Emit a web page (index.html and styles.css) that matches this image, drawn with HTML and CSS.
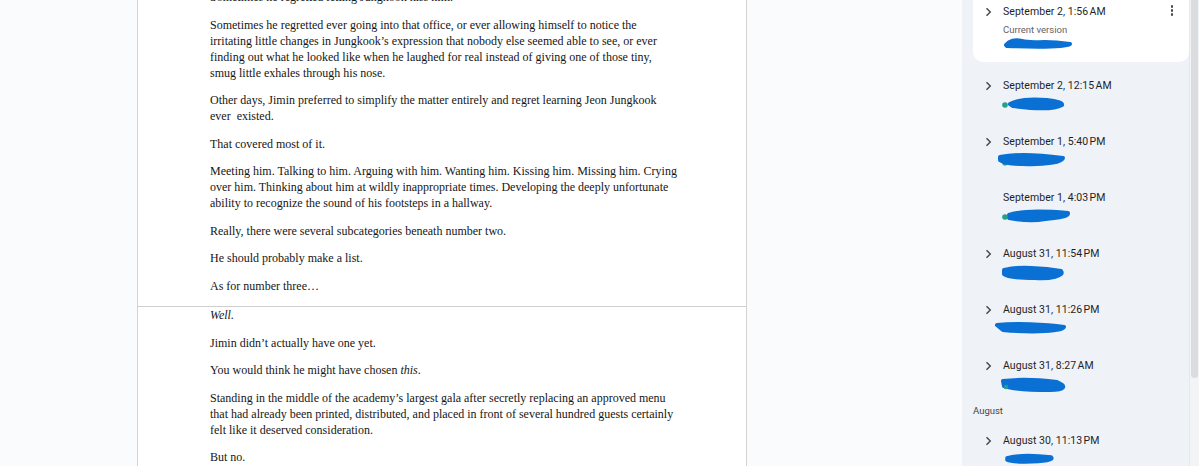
FILE: index.html
```html
<!DOCTYPE html>
<html lang="en">
<head>
    <meta charset="UTF-8">
    <meta name="viewport" content="width=device-width, initial-scale=1.0">
    <title>Version history</title>
    <link rel="stylesheet" href="styles.css">
</head>
<body>
    <div class="workspace">
        <div class="page page-first">
            <p class="first">Sometimes he regretted letting Jungkook kiss him.</p>
            <p>Sometimes he regretted ever going into that office, or ever allowing himself to notice the<br>
            irritating little changes in Jungkook’s expression that nobody else seemed able to see, or ever<br>
            finding out what he looked like when he laughed for real instead of giving one of those tiny,<br>
            smug little exhales through his nose.</p>
            <p>Other days, Jimin preferred to simplify the matter entirely and regret learning Jeon Jungkook<br>
            ever&nbsp; existed.</p>
            <p>That covered most of it.</p>
            <p>Meeting him. Talking to him. Arguing with him. Wanting him. Kissing him. Missing him. Crying<br>
            over him. Thinking about him at wildly inappropriate times. Developing the deeply unfortunate<br>
            ability to recognize the sound of his footsteps in a hallway.</p>
            <p>Really, there were several subcategories beneath number two.</p>
            <p>He should probably make a list.</p>
            <p class="last">As for number three…</p>
        </div>
        <div class="page page-second">
            <p><em>Well.</em></p>
            <p>Jimin didn’t actually have one yet.</p>
            <p>You would think he might have chosen <em>this</em>.</p>
            <p>Standing in the middle of the academy’s largest gala after secretly replacing an approved menu<br>
            that had already been printed, distributed, and placed in front of several hundred guests certainly<br>
            felt like it deserved consideration.</p>
            <p>But no.</p>
        </div>
    </div>

    <div class="history">
        <div class="version version-current">
            <span class="chev"><svg width="7" height="10" viewBox="0 0 7 10"><path d="M1.5 1.2 L5.3 5 L1.5 8.8" fill="none" stroke="#444746" stroke-width="1.4"/></svg></span>
            <div class="version-body">
                <div class="version-date">September 2, 1:56&#8239;AM</div>
                <div class="version-note">Current version</div>
                <svg class="scribble" width="90" height="12" viewBox="0 0 90 12"><path d="M11 8 C14 4 20 2 27 4 C34 6 42 5 50 5 C60 5 68 6 75 7 C70 10 40 10 12 9 Z" fill="#0a70d4" stroke="#0a70d4" stroke-width="4" stroke-linejoin="round" stroke-linecap="round"/></svg>
            </div>
            <span class="kebab"><i></i><i></i><i></i></span>
        </div>

        <div class="version">
            <span class="chev"><svg width="7" height="10" viewBox="0 0 7 10"><path d="M1.5 1.2 L5.3 5 L1.5 8.8" fill="none" stroke="#444746" stroke-width="1.4"/></svg></span>
            <div class="version-body">
                <div class="version-date">September 2, 12:15&#8239;AM</div>
                <svg class="scribble" width="90" height="14" viewBox="0 0 90 14"><path d="M15 7 C24 2 40 2 52 3 C62 4 68 6 67 8 C60 12 40 12 18 9 Z" fill="#0a70d4" stroke="#0a70d4" stroke-width="4" stroke-linejoin="round"/><circle cx="10" cy="8" r="2.8" fill="#26a08a"/></svg>
            </div>
        </div>

        <div class="version">
            <span class="chev"><svg width="7" height="10" viewBox="0 0 7 10"><path d="M1.5 1.2 L5.3 5 L1.5 8.8" fill="none" stroke="#444746" stroke-width="1.4"/></svg></span>
            <div class="version-body">
                <div class="version-date">September 1, 5:40&#8239;PM</div>
                <svg class="scribble" width="90" height="14" viewBox="0 0 90 14"><circle cx="10" cy="10" r="2.6" fill="#26a08a"/><path d="M5 4 C20 1 45 2 68 5 C68 9 50 12 28 11 C16 11 8 9 5 7 Z" fill="#0a70d4" stroke="#0a70d4" stroke-width="4" stroke-linejoin="round"/></svg>
            </div>
        </div>

        <div class="version">
            <span class="chev"></span>
            <div class="version-body">
                <div class="version-date">September 1, 4:03&#8239;PM</div>
                <svg class="scribble" width="90" height="14" viewBox="0 0 90 14"><path d="M14 6 C25 2 50 2 73 4 C74 8 60 9 50 10 C40 12 25 11 14 9 Z" fill="#0a70d4" stroke="#0a70d4" stroke-width="4" stroke-linejoin="round"/><circle cx="10" cy="8" r="2.8" fill="#26a08a"/></svg>
            </div>
        </div>

        <div class="version">
            <span class="chev"><svg width="7" height="10" viewBox="0 0 7 10"><path d="M1.5 1.2 L5.3 5 L1.5 8.8" fill="none" stroke="#444746" stroke-width="1.4"/></svg></span>
            <div class="version-body">
                <div class="version-date">August 31, 11:54&#8239;PM</div>
                <svg class="scribble" width="90" height="16" viewBox="0 0 90 16"><path d="M9 5 C22 1 50 3 66 6 C70 11 55 14 40 13 C25 13 12 12 9 9 Z" fill="#0a70d4" stroke="#0a70d4" stroke-width="4" stroke-linejoin="round"/></svg>
            </div>
        </div>

        <div class="version">
            <span class="chev"><svg width="7" height="10" viewBox="0 0 7 10"><path d="M1.5 1.2 L5.3 5 L1.5 8.8" fill="none" stroke="#444746" stroke-width="1.4"/></svg></span>
            <div class="version-body">
                <div class="version-date">August 31, 11:26&#8239;PM</div>
                <svg class="scribble" width="90" height="14" viewBox="0 0 90 14"><path d="M2 4 C20 2 50 3 69 6 C68 10 40 12 8 9 Z" fill="#0a70d4" stroke="#0a70d4" stroke-width="4" stroke-linejoin="round"/></svg>
            </div>
        </div>

        <div class="version">
            <span class="chev"><svg width="7" height="10" viewBox="0 0 7 10"><path d="M1.5 1.2 L5.3 5 L1.5 8.8" fill="none" stroke="#444746" stroke-width="1.4"/></svg></span>
            <div class="version-body">
                <div class="version-date">August 31, 8:27&#8239;AM</div>
                <svg class="scribble" width="90" height="16" viewBox="0 0 90 16"><path d="M8 4 C25 2 45 3 62 5 C72 9 70 13 55 13 C35 13 18 12 9 9 Z" fill="#0a70d4" stroke="#0a70d4" stroke-width="4" stroke-linejoin="round"/><circle cx="11" cy="10" r="2.2" fill="#26a08a"/></svg>
            </div>
        </div>

        <div class="month">August</div>

        <div class="version">
            <span class="chev"><svg width="7" height="10" viewBox="0 0 7 10"><path d="M1.5 1.2 L5.3 5 L1.5 8.8" fill="none" stroke="#444746" stroke-width="1.4"/></svg></span>
            <div class="version-body">
                <div class="version-date">August 30, 11:13&#8239;PM</div>
                <svg class="scribble" width="90" height="12" viewBox="0 0 90 12"><path d="M12 6 C22 3 40 3 56 5 C60 8 50 10 30 10 C20 10 14 9 12 8 Z" fill="#0a70d4" stroke="#0a70d4" stroke-width="3.5" stroke-linejoin="round"/></svg>
            </div>
        </div>
    </div>

    <div class="scrollbar"><div class="thumb"></div></div>
</body>
</html>
```

FILE: styles.css
```css
body {
    margin: 0;
    height: 466px;
    overflow: hidden;
    display: flex;
    background-color: #f9fbfd;
    font-family: Roboto, "Liberation Sans", sans-serif;
}
.workspace {
    flex: 1;
    padding-left: 137px;
}
.page {
    width: 465px;
    padding: 0 71px 0 72px;
    background: #fff;
    border-left: 1px solid #d3d3d3;
    border-right: 1px solid #d3d3d3;
    font-family: "Liberation Serif", "Times New Roman", serif;
    font-size: 12px;
    line-height: 16px;
    color: #161616;
    white-space: nowrap;
}
.page p { margin: 0 0 11.5px; }
.page p.first { margin-top: -11px; }
.page p.last { margin-bottom: 0; }
.page-first {
    padding-bottom: 12.5px;
    border-bottom: 1px solid #cfcfcf;
}
.page-second { height: 200px; }

.history {
    width: 216px;
    padding: 0 0 0 11px;
    background: #eff2f7;
    font-size: 10.5px;
    color: #1f1f1f;
}
.version {
    display: flex;
    height: 56px;
    box-sizing: border-box;
    padding: 15px 0 0 12px;
}
.version-current {
    margin-top: -12px;
    height: auto;
    padding-bottom: 13px;
    background: #fff;
    border-radius: 10px;
    position: relative;
}
.chev {
    width: 18px;
    height: 18px;
    display: flex;
    align-items: center;
}
.version-body { flex: 1; }
.version-date {
    line-height: 18px;
    letter-spacing: 0.05px;
}
.version-note {
    margin-top: 2px;
    font-size: 9.5px;
    line-height: 14px;
    color: #5f6368;
}
.version .scribble {
    display: block;
    margin: 2px 0 0 -8px;
}
.version-current .scribble { margin-top: 0; }
.kebab {
    position: absolute;
    right: 16px;
    top: 17px;
    display: flex;
    flex-direction: column;
    gap: 1.5px;
}
.kebab i {
    width: 2.5px;
    height: 2.5px;
    border-radius: 50%;
    background: #444746;
}
.month {
    padding: 6px 0 0;
    line-height: 13px;
    font-size: 9.5px;
    color: #444746;
}
.scrollbar {
    width: 10px;
    background: #f3f4f6;
    border-left: 1px solid #e6e8eb;
    box-sizing: border-box;
}
.thumb {
    width: 7px;
    height: 378px;
    margin-left: 1px;
    border-radius: 0 0 4px 4px;
    background: #dadce0;
}
```
